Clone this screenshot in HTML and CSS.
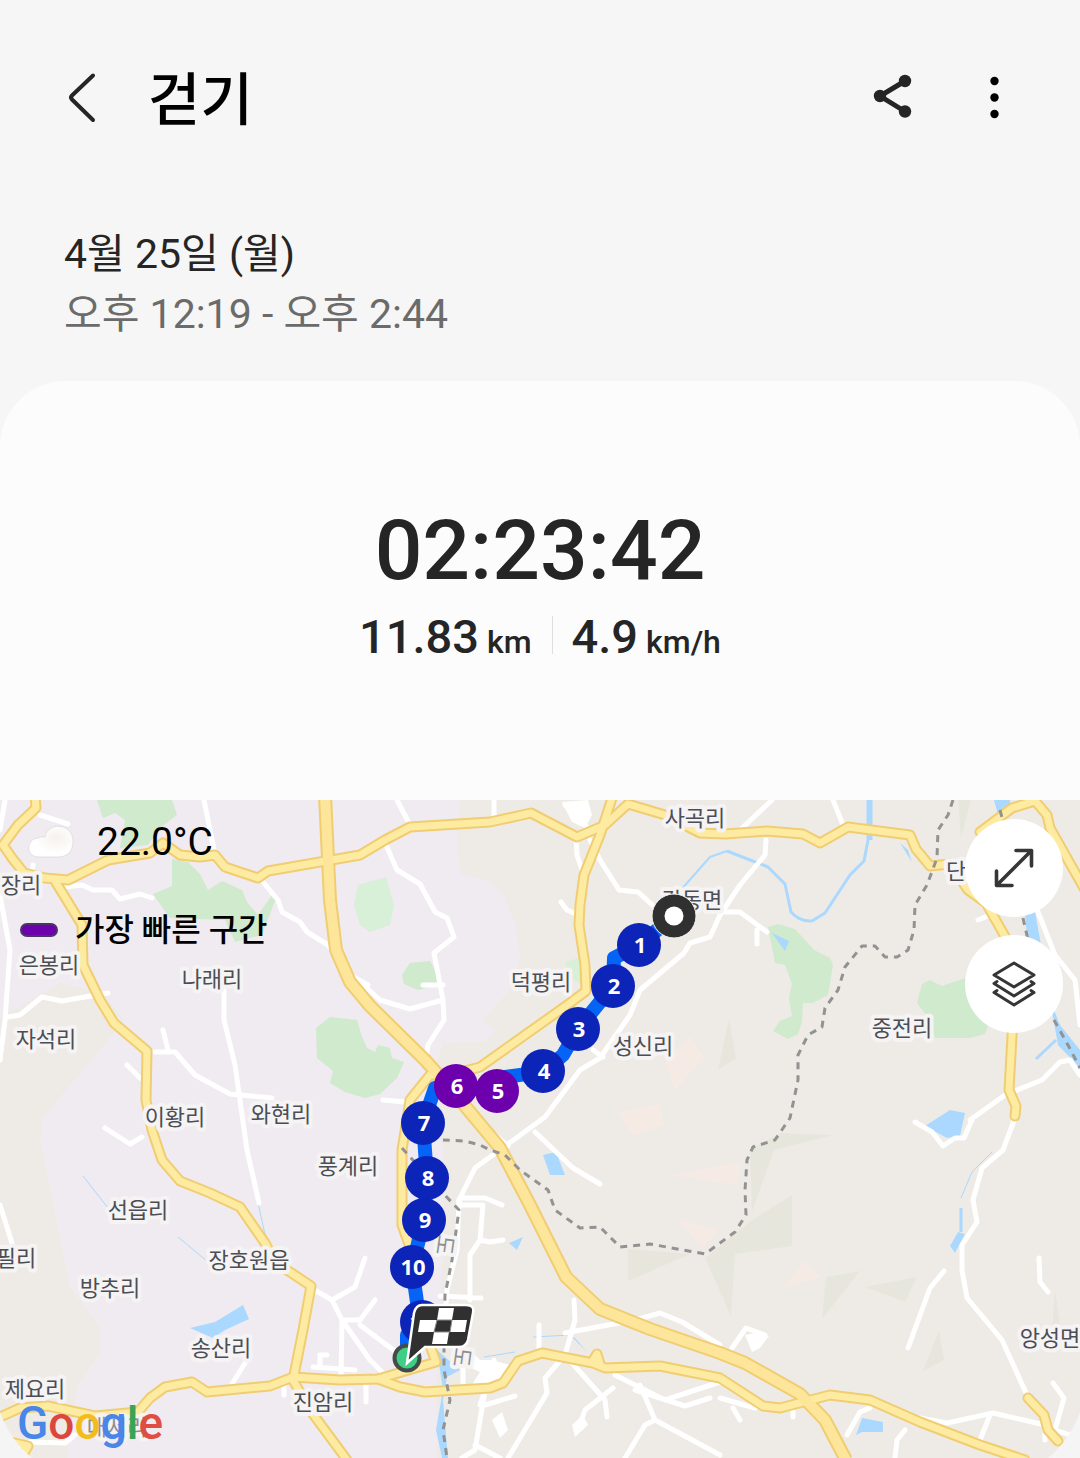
FILE: index.html
```html
<!DOCTYPE html>
<html lang="ko">
<head>
<meta charset="utf-8">
<meta name="viewport" content="width=device-width, initial-scale=1">
<title>걷기</title>
<link rel="stylesheet" href="styles.css">
</head>
<body>
<header class="bar">
  <button class="icon-button" type="button" aria-label="뒤로">
    <svg width="60" height="60" viewBox="0 0 60 60"><path d="M41 8.500 L20 28.500 Q18 30.500 20 32.500 L41 53" fill="none" stroke="#252525" stroke-width="4" stroke-linecap="round"/></svg>
  </button>
  <h1 class="title">걷기</h1>
  <div class="actions">
    <button class="icon-button" type="button" aria-label="공유">
      <svg width="60" height="60" viewBox="0 0 60 60"><path d="M42 14 L17 29 L42 44.500" fill="none" stroke="#252525" stroke-width="5"/><g fill="#252525"><circle cx="42" cy="14" r="6.200"/><circle cx="17" cy="29" r="6.200"/><circle cx="42" cy="44.500" r="6.200"/></g></svg>
    </button>
    <button class="icon-button" type="button" aria-label="더보기">
      <svg width="60" height="60" viewBox="0 0 60 60"><circle cx="30.500" cy="14" r="4.200"/><circle cx="30.500" cy="30.500" r="4.200"/><circle cx="30.500" cy="47" r="4.200"/></svg>
    </button>
  </div>
</header>
<div class="when">
  <p class="date">4월 25일 (월)</p>
  <p class="hours">오후 12:19 - 오후 2:44</p>
</div>
<main class="card">
  <section class="summary">
    <p class="duration">02:23:42</p>
    <div class="stats">
      <p class="stat">11.83 <span class="unit">km</span></p>
      <p class="stat">4.9 <span class="unit">km/h</span></p>
    </div>
  </section>
  <section class="map" aria-label="경로 지도">
    <svg class="map-canvas" viewBox="0 800 1080 658">
      <defs>
        <g id="roads">
          <path d="M35 795 L36 808 L18 825 L3 845 L12 858 L24 873 L45 878 L68 880 L108 860 L150 853 L163 843 L180 855 L200 857 L215 855 L225 867 L258 878 L268 871 L320 862 L360 855 L385 840 L410 827 L490 822 L531 813 L577 837 L605 825 L628 804 L665 815 L700 833 L725 834 L767 831 L803 834 L820 843 L848 827 L910 835 L916 849 L930 866 L950 864 L968 890 L986 903 L1007 940 L1014 1000 L1009 1090 L1016 1106 L1015 1116"/>
          <path d="M55 881 L82 925 L83 965 L100 1000 L114 1023 L147 1051 L146 1100 L152 1130 L162 1160 L180 1181 L210 1193 L240 1207 L265 1243 L275 1262 L311 1286 L303 1330 L293 1380"/>
          <path d="M613 795 L600 835 L584 875 L580 905 L579 925 L585 965 L586 991 L570 1003 L480 1067 L450 1075 L430 1075 L410 1100 L402 1150 L402 1225 L411 1250"/>
          <path d="M0 1417 L20 1408 L48 1406 L95 1416 L138 1412 L150 1398 L165 1387 L192 1382 L207 1392 L270 1386 L293 1377 L340 1380 L378 1379 L436 1362 L428 1340"/>
          <path d="M378 1379 L400 1387 L425 1392 L490 1388 L503 1383 L518 1361 L542 1353 L593 1363 L605 1368 L660 1366 L720 1378 L763 1406 L780 1408 L830 1395 L870 1400 L920 1422 L980 1445 L1025 1460"/>
          <path d="M293 1380 L310 1410 L347 1460"/>
          <path d="M1028 1398 L1044 1415 L1048 1430 L1058 1441"/>
          <path d="M980 832 L1012 808 L1035 801 L1047 815 L1050 828 L1085 890"/>
          <path d="M10 1442 L28 1446 L20 1460"/>
          <path d="M592 1362 L597 1354 L600 1364"/>
        </g>
        <path id="highway" d="M325 795 L330 900 L336 950 L350 982 L370 1006 L425 1060 L450 1088 L475 1118 L500 1148 L530 1205 L566 1277 L600 1309 L650 1329 L720 1353 L745 1363 L800 1394 L825 1420 L846 1460"/>
      </defs>
      <rect y="800" width="1080" height="658" fill="#eeebe6"/>
      <path fill="#efebf0" d="M0 800 H460 L457 840 L460 873 L485 880 L503 893 L515 923 L520 957 L510 990 L483 1020 L495 1030 L485 1042 L443 1043 L433 1073 L443 1150 V1247 L437 1370 V1458 H67 L77 1387 L100 1353 L100 1327 L70 1287 L60 1237 L50 1187 L40 1137 L43 1118 L60 1097 L100 1050 L123 1020 L103 993 L60 983 L0 1018 Z"/>
      <g fill="#cfeacd">
        <path d="M97 800 H172 L177 815 L160 828 L148 845 L120 848 L125 820 L115 813 L103 818 Z"/>
        <path d="M172 859 L188 862 L200 874 L208 890 L222 881 L242 890 L247 902 L258 915 L272 895 L276 898 L262 935 L235 942 L225 920 L170 918 L153 894 L172 886 Z"/>
        <path d="M316 1028 L330 1017 L357 1020 L362 1037 L367 1048 L375 1052 L378 1045 L390 1048 L392 1058 L404 1062 L397 1078 L380 1094 L365 1098 L345 1092 L330 1083 L333 1071 L317 1058 Z"/>
        <path d="M402 975 L410 963 L430 961 L438 975 L437 985 L418 990 L404 984 Z"/>
        <path d="M768 927 L778 924 L795 929 L814 950 L830 958 L833 965 L828 995 L813 1003 L803 1003 L802 1022 L798 1034 L788 1039 L773 1031 L780 1021 L792 1016 L789 998 L792 984 L785 965 L775 963 Z"/>
        <path d="M917 1003 L922 984 L930 980 L942 986 L965 978 L990 1020 L985 1034 L970 1038 L935 1038 L930 1020 Z"/>
      </g>
      <g fill="#d8efd8"><path d="M358 885 L386 877 L394 905 L390 925 L370 932 L360 925 L354 905 Z"/><path d="M565 962 L579 958 L582 985 L570 978 Z"/></g>
      <g fill="#e6e6dd">
        <path d="M729 1019 L736 1058 L718 1070 Z M958 800 H971 L961 838 Z M780 1133 L833 1135 L774 1150 L752 1212 L750 1150 Z M792 1195 V1246 L735 1254 L731 1316 L705 1258 L752 1220 Z M628 1249 L690 1254 L628 1281 Z M826 1277 L860 1271 L822 1319 Z M865 1287 L917 1277 L905 1302 Z M939 1330 L944 1360 L923 1371 Z M1055 1290 L1060 1325 L1050 1356 Z"/>
      </g>
      <g fill="#f6eae5">
        <path d="M690 1037 L704 1057 L675 1090 L665 1062 Z M618 1113 L658 1104 L664 1124 L633 1136 Z M672 1175 L740 1162 L737 1185 Z M678 1220 L718 1230 L702 1248 Z M803 1261 L821 1277 L784 1288 Z"/>
      </g>
      <g fill="#abd8ff">
        <path d="M190 1328 L215 1322 L243 1305 L249 1319 L225 1330 L213 1338 Z M543 1155 L556 1152 L565 1175 L550 1175 Z M509 1243 L523 1237 L517 1250 Z M925 1126 L950 1110 L965 1113 L960 1136 L947 1138 Z M772 933 L789 941 L785 951 Z M862 1418 L883 1422 V1432 H862 L856 1435 Z M958 1232 L965 1234 L955 1253 L950 1246 Z M437 1350 L460 1370 L447 1377 L443 1400 L448 1458 L442 1458 L436 1430 L443 1390 Z M994 800 H1010 L1012 815 L1000 822 Z M1024 905 L1035 912 L1042 950 L1028 945 Z M1050 1000 L1060 1025 L1080 1050 V1068 L1058 1045 Z M900 843 L908 850 L912 862 Z M571 1336 L575 1338 L588 1353 Z"/>
      </g>
      <g fill="none" stroke="#abd8ff" stroke-width="3" stroke-linejoin="round">
        <path d="M672 900 L710 857 L727 851" stroke-width="2"/><path d="M727 851 L768 867 L785 884 L791 912 Q800 922 812 921 L825 913 L850 875 L864 861 L868 840 V800"/>
        <path d="M870 800 V840" stroke-width="5"/><path d="M1056 1040 L1036 1059" /><path d="M961 1208 V1232"/>
        <path d="M961 1198 L972 1172 L992 1152 M83 1176 L108 1208 M178 1237 L208 1262 M258 1203 L268 1248 M533 1337 L571 1335 M484 1357 L515 1352" stroke-width="1"/>
      </g>
      <g class="minor-roads">
        <path d="M5 800 L0 830 M40 815 L68 824 M0 895 L10 950 L5 1020 L0 1060 M8 1017 L20 1015 L42 997 L62 1001 L108 993 M65 887 L82 885 L93 890 L112 890 L120 899 L140 894 L152 898 M204 800 L215 855 M263 882 L278 900 L282 912 L300 922 L307 932 L328 945 L350 975 L368 985"/>
        <path d="M224 990 V1020 L235 1065 L247 1150 L259 1203 M155 1052 H175 L195 1075 L230 1094 L272 1098 M163 1030 L168 1050 M127 1065 L140 1078 M105 1128 L130 1144 L142 1137 M0 1205 L12 1243 M32 872 L33 865"/>
        <path d="M397 800 L410 825 M494 800 V818 M386 845 L397 870 L420 884 L435 912 L447 918 L454 937 L434 953 L443 1000 L444 1020 L428 1045 L426 1060 M443 985 L423 985 M443 1000 L410 1009 L380 1000 L360 982 M576 840 L577 855 L582 870 M590 840 L600 860 L619 890 L638 892 L660 912 M561 902 L567 910 L576 914 M565 805 L590 830 M383 1100 L405 1102"/>
        <path d="M772 800 L740 830 M833 800 L843 825 M766 840 L765 855 L740 885 L720 915 L710 937 L690 943 L684 953 L640 990 L630 1015 L600 1058 L580 1070 L545 1117 L508 1144 L475 1168 L459 1200 M720 912 L740 912 L767 932 M757 930 V944 M593 1050 L603 1057"/>
        <path d="M489 1130 L508 1146 M535 1132 L573 1168 L600 1184 M459 1200 L460 1205 H483 L480 1240 L490 1242 L503 1240 M460 1198 L485 1198 L502 1205 M480 1240 L470 1255 L470 1300 M440 1296 L481 1298 M459 1200 L457 1250 L447 1290 L444 1330"/>
        <path d="M365 1258 L355 1287 L332 1300 L311 1288 M332 1300 L342 1320 L341 1378 M342 1320 L360 1320 L375 1300 M342 1320 L370 1360 L385 1375 M360 1325 L400 1355 M313 1367 L355 1370 M320 1365 V1355 H327 M247 1360 L232 1384 M366 1385 V1402 M284 1385 V1395 M30 1442 L65 1443 L75 1435"/>
        <path d="M574 1300 L575 1320 L565 1355 L545 1378 L547 1393 L508 1458 M565 1333 L635 1320 L660 1313 L682 1322 L720 1345 M539 1325 V1355 M565 1355 L605 1400 L607 1417 M613 1388 L585 1410 L578 1430 M615 1375 L665 1400 L720 1382 M640 1385 L655 1420 L645 1425 L625 1458 M655 1420 L720 1455 M635 1390 L685 1406 L710 1398 M480 1405 L485 1390 L475 1450 L462 1458 M475 1445 L500 1458 M485 1405 L515 1396 M463 1365 V1390 M494 1360 V1385"/>
        <path d="M732 1348 L746 1328 L765 1335 M944 1271 L930 1288 L908 1348 M1015 1118 L1003 1150 L982 1168 L973 1200 L977 1222 L962 1245 L962 1270 L967 1298 L1002 1340 L1026 1393 M1039 1258 L1040 1282 L1048 1292 M915 1122 L932 1132 L943 1146 L955 1138 L964 1138 L972 1120 M970 1120 L1005 1095 L1042 1080 L1060 1062 L1070 1060 L1080 1075 M1038 912 L1055 955 L1075 980 L1080 1025 M978 920 L990 915"/>
        <path d="M720 1398 L755 1408 M920 1418 L947 1423 L993 1413 L1045 1425 M870 1408 L860 1412 L847 1435 M905 1430 L897 1440 L895 1458 M990 1415 L980 1440 M1053 1383 L1064 1398 L1055 1430 L1070 1435 M733 1408 L740 1420 M793 1410 V1417 M1045 1420 V1440"/>
      </g>
      <g fill="#fff">
        <path d="M562 802 L588 800 L592 815 L585 828 L572 822 Z M492 1420 L502 1412 L508 1430 L500 1438 Z M572 1425 L583 1415 L588 1425 L575 1437 Z M745 1335 L755 1333 L769 1336 L760 1348 L752 1352 Z M450 1358 L468 1348 L480 1360 L492 1360 L510 1365 L505 1380 L470 1388 L480 1372 Z"/>
      </g>
      <use href="#roads" class="road-edge"/><use href="#highway" class="highway-edge"/>
      <use href="#roads" class="road"/><use href="#highway" class="highway"/>
      <g class="boundary">
        <path d="M953 800 L948 815 L938 830 L937 858 L927 885 L915 905 L914 930 L908 950 L897 957 L885 957 L875 946 L862 946 L845 967 L838 990 L825 1008 L822 1027 L808 1035 L798 1055 V1080 L790 1118 L775 1140 L753 1147 L747 1160 L745 1190 L746 1215 L735 1232 L705 1254 L650 1244 L620 1247 L600 1227 L580 1228 L555 1210 L548 1190 L520 1170 L505 1155 L490 1150 L480 1145 L465 1141 L443 1140"/>
        <path d="M402 1148 L440 1190 L459 1210 L452 1260 L445 1295 L444 1330 L444 1370 L450 1400 L443 1430 L447 1458 M1000 810 L1004 825 M1023 918 L1028 940 M1054 1020 L1068 1045 L1080 1068"/>
      </g>
      <g class="places">
        <text x="695" y="826">사곡리</text><text x="692" y="908">감동면</text>
        <text x="21" y="893">장리</text><text x="49" y="973">은봉리</text><text x="212" y="987">나래리</text><text x="541" y="990">덕평리</text>
        <text x="46" y="1047">자석리</text><text x="643" y="1054">성신리</text><text x="902" y="1036">중전리</text><text x="956" y="879">단</text>
        <text x="175" y="1125">이황리</text><text x="281" y="1122">와현리</text><text x="348" y="1174">풍계리</text><text x="138" y="1218">선읍리</text>
        <text x="16" y="1266">필리</text><text x="249" y="1268">장호원읍</text><text x="110" y="1296">방추리</text><text x="221" y="1356">송산리</text>
        <text x="35" y="1397">제요리</text><text x="323" y="1410">진암리</text><text x="1050" y="1346">앙성면</text>
        <text class="faint" x="117" y="1435">대서리</text>
        <text class="faint" transform="translate(437 1244) rotate(98)">도</text><text class="faint" transform="translate(454 1356) rotate(98)">도</text>
      </g>
      <path class="route" d="M674 916 L639 945 L614 958 L613 986 L578 1029 L563 1055 L543 1072 L497 1078"/>
      <path class="route" d="M456 1086 L435 1088 L423 1123 L427 1178 L424 1220 L412 1267 L420 1323 L407 1335 V1356"/>
      <path class="route fast" d="M456 1086 L497 1091"/>
      <g fill="#0d24b8">
        <circle cx="639" cy="945" r="22"/><circle cx="613" cy="986" r="22"/><circle cx="578" cy="1029" r="22"/><circle cx="543" cy="1071" r="22"/><circle cx="423" cy="1123" r="22"/><circle cx="427" cy="1178" r="22"/><circle cx="424" cy="1220" r="22"/><circle cx="412" cy="1267" r="22"/><circle cx="422" cy="1322" r="22"/>
      </g>
      <g fill="#6b00ac"><circle cx="456" cy="1086" r="22"/><circle cx="497" cy="1091" r="22"/></g>
      <g class="laps">
        <text x="640" y="953">1</text><text x="614" y="994">2</text><text x="579" y="1037">3</text><text x="544" y="1079">4</text><text x="498" y="1099">5</text><text x="457" y="1094">6</text><text x="424" y="1131">7</text><text x="428" y="1186">8</text><text x="425" y="1228">9</text><text x="413" y="1275">10</text><text x="422" y="1330">11</text>
      </g>
      <circle cx="674" cy="916" r="22" fill="#303030" stroke="#f4f4f4"/><circle cx="674" cy="916" r="9.500" fill="#fff"/>
      <circle cx="407" cy="1358" r="12.500" fill="#3fce85" stroke="#454b48" stroke-width="4"/>
      <path d="M422 1305 H466 Q475 1305 473 1313 L468 1340 Q466 1347 459 1347 H425 L407 1363 L414 1313 Q416 1305 422 1305 Z" fill="#303030" stroke="#fff" stroke-width="2.500"/>
      <path fill="#fff" d="M439 1308 H454 L452 1320 H467 L465 1332 H449 L447 1344 H432 L434 1332 H418 L420 1320 H437 Z"/><path fill="#303030" stroke="#8b8b8b" d="M437 1320 H452 L450 1332 H434 Z"/>
      <text class="google" x="17" y="1439"><tspan fill="#4a86e8">G</tspan><tspan fill="#db473d">o</tspan><tspan fill="#f2bd1c">o</tspan><tspan fill="#4a86e8">g</tspan><tspan fill="#38a556">l</tspan><tspan fill="#e04d43">e</tspan></text>
      <path fill="#f5f5f5" d="M0 1412 Q10 1440 32 1458 H0 Z M1080 1412 Q1070 1440 1048 1458 H1080 Z"/>
    </svg>
    <div class="info">
      <p class="weather">
        <svg width="48" height="36" viewBox="0 0 48 36"><defs><radialGradient id="cloud" cx="62%" cy="38%"><stop offset="0" stop-color="#f6f2ec"/><stop offset="1" stop-color="#fff"/></radialGradient></defs><path d="M12 33 C-2 33 -1 15 11 14 C15 12 17 13 18 13 C20 -3 46 -1 46 17 C46 28 40 33 31 33 Z" fill="url(#cloud)" stroke="#d9d6da" stroke-width=".7"/></svg>
        22.0°C
      </p>
      <p class="legend"><span class="swatch"></span>가장 빠른 구간</p>
    </div>
    <div class="map-tools">
      <button class="round-button" type="button" aria-label="지도 확대">
        <svg width="48" height="48" viewBox="0 0 48 48"><path d="M7 41 L41 7 M26 6.500 H41.500 V22 M6.500 27 V41.500 H22" fill="none" stroke="#363636" stroke-width="3.600" stroke-linecap="round" stroke-linejoin="round"/></svg>
      </button>
      <button class="round-button" type="button" aria-label="지도 유형">
        <svg width="48" height="48" viewBox="0 0 48 48"><path d="M24 3 L44 15 L24 27 L4 15 Z M7 21.500 L4 23.500 L24 36 L44 23.500 L41 21.500 M7 30.500 L4 32.500 L24 45 L44 32.500 L41 30.500" fill="none" stroke="#363636" stroke-width="3" stroke-linejoin="round" stroke-linecap="round"/></svg>
      </button>
    </div>
  </section>
</main>
</body>
</html>
```
FILE: styles.css
```css
* { box-sizing: border-box; }
body {
  margin: 0;
  background: #f6f6f6;
  color: #252525;
  font-family: Roboto, "Noto Sans CJK KR", sans-serif;
}
p, h1 { margin: 0; }
svg { display: block; }

.bar {
  display: flex;
  align-items: center;
  height: 137px;
  padding: 57px 56px 0 52px;
}
.icon-button {
  width: 60px;
  height: 60px;
  padding: 0;
  border: 0;
  background: none;
}
.title {
  margin-left: 36px;
  padding-top: 8px;
  color: #000;
  font-size: 57px;
  font-weight: 500;
  line-height: 80px;
}
.actions { display: flex; gap: 41px; margin-left: auto; }

.when {
  padding: 87px 64px 37px;
  font-size: 41px;
  line-height: 60px;
}
.hours { color: #6b6b6b; }

.card {
  overflow: hidden;
  border-radius: 66px 66px 0 0;
  background: #fcfcfc;
}
.summary { padding: 122px 24px 139px; text-align: center; font-weight: 500; }
.duration { font-size: 84px; line-height: 96px; }
.stats {
  display: flex;
  justify-content: center;
  margin-top: 14px;
}
.stat {
  display: flex;
  align-items: baseline;
  gap: 8px;
  height: 48px;
  font-size: 47px;
  line-height: 48px;
}
.stat + .stat {
  margin-left: 20px;
  padding-left: 20px;
  background: linear-gradient(#dedede, #dedede) 0 3px / 1px 38px no-repeat;
}
.unit { font-size: 32px; }

.map { position: relative; }
.map-canvas { width: 100%; height: auto; }
.minor-roads, .road-edge, .road, .highway-edge, .highway, .boundary, .route {
  fill: none;
  stroke-linejoin: round;
}
.minor-roads { stroke: #fff; stroke-width: 5px; stroke-linecap: round; }
.road-edge { stroke: #f1cd72; stroke-width: 11px; stroke-linecap: round; }
.road { stroke: #feeba2; stroke-width: 7px; stroke-linecap: round; }
.highway-edge { stroke: #f1cd72; stroke-width: 14px; }
.highway { stroke: #fde59a; stroke-width: 10px; }
.boundary { stroke: #929292; stroke-width: 3px; stroke-dasharray: 7 6; }
.places {
  fill: #4b4e55;
  font-family: "Noto Sans CJK KR", sans-serif;
  font-size: 22px;
  text-anchor: middle;
  stroke: #f5f3f3;
  stroke-width: 8px;
  stroke-linejoin: round;
  paint-order: stroke;
}
.faint { fill: #8e8e90; }
.route { stroke: #0563f5; stroke-width: 14px; stroke-linecap: round; }
.fast { stroke: #6b00ac; }
.laps {
  fill: #fff;
  font-family: "Noto Sans", sans-serif;
  font-size: 22px;
  font-weight: 700;
  text-anchor: middle;
}
.google {
  font-size: 46px;
  font-weight: 500;
}

.info {
  position: absolute;
  top: 18px;
  left: 20px;
  color: #000;
}
.weather {
  display: flex;
  align-items: center;
  gap: 22px;
  padding-left: 7px;
  font-size: 39px;
  line-height: 48px;
}
.legend {
  display: flex;
  align-items: center;
  gap: 17px;
  margin-top: 40px;
  font-size: 32px;
  font-weight: 500;
  line-height: 48px;
}
.swatch {
  width: 38px;
  height: 14px;
  border: 2px solid #4d3468;
  border-radius: 7px;
  background: #6b00ac;
}
.map-tools {
  position: absolute;
  top: 19px;
  right: 17px;
  display: grid;
  gap: 18px;
}
.round-button {
  display: grid;
  place-items: center;
  width: 98px;
  height: 98px;
  padding: 0;
  border: 0;
  border-radius: 50%;
  background: #fff;
}
```
